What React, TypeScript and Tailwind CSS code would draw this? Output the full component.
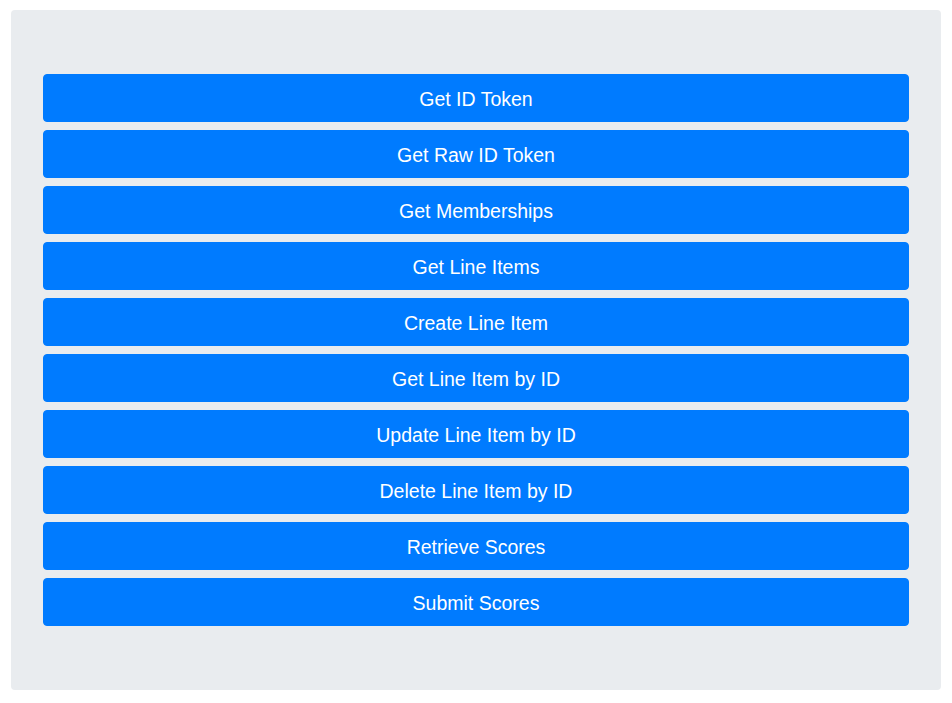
const actions = [
  'Get ID Token',
  'Get Raw ID Token',
  'Get Memberships',
  'Get Line Items',
  'Create Line Item',
  'Get Line Item by ID',
  'Update Line Item by ID',
  'Delete Line Item by ID',
  'Retrieve Scores',
  'Submit Scores',
]

export default function App() {
  return (
    <div className="min-h-screen bg-white px-[11px] pt-[10px] font-['Liberation_Sans',Arial,sans-serif]">
      <div className="flex flex-col gap-2 rounded bg-[#e9ecef] px-8 py-16">
        {actions.map((label) => (
          <button
            key={label}
            type="button"
            className="w-full rounded border border-[#007bff] bg-[#007bff] px-4 pt-[9px] pb-[7px] text-[19.5px] leading-[30px] text-white"
          >
            {label}
          </button>
        ))}
      </div>
    </div>
  )
}
